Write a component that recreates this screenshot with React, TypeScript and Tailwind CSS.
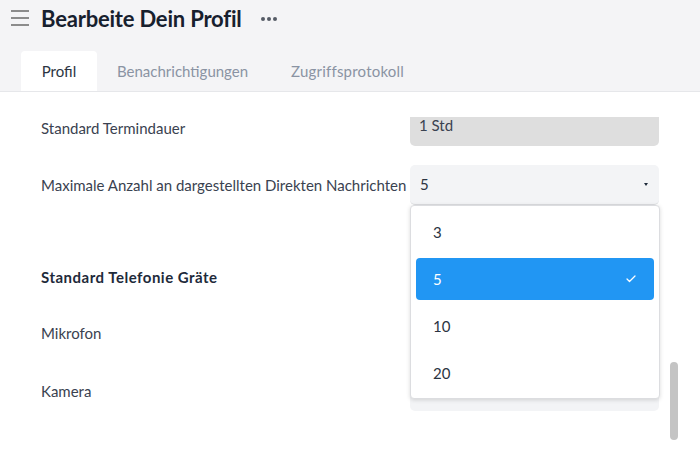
import { Check } from "lucide-react";

const FONT = { fontFamily: "Lato, 'Noto Sans', sans-serif" };

const OPTIONS = ["3", "5", "10", "20"];

const Row = ({ label, bold, h, children }: { label: string; bold?: boolean; h: string; children?: React.ReactNode }) => (
  <div className={`flex items-center ${h}`}>
    <div className={`w-[369px] text-[15px] ${bold ? "font-bold text-[#1e2a3a] tracking-[0.5px]" : "text-[#3a4250]"}`}>{label}</div>
    <div className="w-[249px]">{children}</div>
  </div>
);

export default function App() {
  return (
    <div className="w-[700px] h-[450px] overflow-hidden bg-white relative" style={FONT}>
      {/* header */}
      <div className="bg-[#f4f4f6] h-[92px] flex flex-col border-b border-[#e6e7ea]">
        <div className="flex items-center h-[36px] pl-[11px]">
          <div className="flex flex-col gap-[5px] w-[18px]">
            <span className="h-[2px] bg-[#8c8c8c]" />
            <span className="h-[2px] bg-[#8c8c8c]" />
            <span className="h-[2px] bg-[#8c8c8c]" />
          </div>
          <h1 className="ml-[12px] text-[22px] font-bold text-[#17202e] tracking-[-0.2px]">Bearbeite Dein Profil</h1>
          <div className="ml-[19px] flex gap-[2px] mt-[2px]">
            <span className="w-[4px] h-[4px] rounded-full bg-[#555b66]" />
            <span className="w-[4px] h-[4px] rounded-full bg-[#555b66]" />
            <span className="w-[4px] h-[4px] rounded-full bg-[#555b66]" />
          </div>
        </div>
        <div className="flex items-end mt-auto pl-[21px] text-[15px]">
          <div className="bg-white rounded-t-[4px] h-[40px] w-[76px] flex items-center justify-center text-[#2b3442]">Profil</div>
          <div className="h-[40px] flex items-center ml-[20px] text-[#8a93a3]">Benachrichtigungen</div>
          <div className="h-[40px] flex items-center ml-[43px] text-[#8a93a3] tracking-[0.2px]">Zugriffsprotokoll</div>
        </div>
      </div>

      {/* content */}
      <div className="pl-[41px] relative">
        <div className="flex items-start h-[73px]">
          <div className="w-[369px] text-[15px] text-[#3a4250] mt-[25px]">Standard Termindauer</div>
          <div className="w-[249px] mt-[25px] h-[29px] bg-[#dedede] rounded-b-[5px] text-[15px] text-[#3a4250] pl-[9px] leading-[17px]">1 Std</div>
        </div>
        <div className="flex items-center h-[40px]">
          <div className="w-[369px] text-[15px] text-[#3a4250] whitespace-nowrap">Maximale Anzahl an dargestellten Direkten Nachrichten</div>
          <div className="w-[249px] h-[40px] bg-[#f3f4f6] rounded-[5px] border-b border-[#dcdde0] flex items-center pl-[10px] pr-[11px] text-[15px] text-[#2b3442]">
            <span>5</span>
            <span className="ml-auto w-0 h-0 border-l-[2.5px] border-r-[2.5px] border-t-[3px] border-l-transparent border-r-transparent border-t-[#1e2a3a]" />
          </div>
        </div>
        <div className="h-[45px]" />
        <Row label="Standard Telefonie Gräte" bold h="h-[55px]" />
        <Row label="Mikrofon" h="h-[56px]">
          <div className="h-[40px] bg-[#f3f4f6] rounded-[5px]" />
        </Row>
        <Row label="Kamera" h="h-[60px]">
          <div className="h-[40px] bg-[#f3f4f6] rounded-[5px]" />
        </Row>

        {/* dropdown menu */}
        <div className="absolute left-[410px] top-[113px] w-[250px] h-[194px] bg-white rounded-[4px] border border-[#dcdde0] shadow-[0_1px_4px_rgba(0,0,0,0.15)] px-[5px] pt-[5px] flex flex-col gap-[5px]">
          {OPTIONS.map((o) =>
            o === "5" ? (
              <div key={o} className="h-[42px] bg-[#2196f3] rounded-[4px] flex items-center pl-[17px] pr-[17px] text-white text-[15px]">
                <span>{o}</span>
                <Check size={12} strokeWidth={2.5} className="ml-auto" />
              </div>
            ) : (
              <div key={o} className="h-[42px] flex items-center pl-[17px] text-[15px] text-[#2b3442]">{o}</div>
            )
          )}
        </div>
      </div>

      {/* scrollbar */}
      <div className="absolute left-[670px] top-[362px] w-[8px] h-[78px] bg-[#c4c4c4] rounded-full" />
    </div>
  );
}
